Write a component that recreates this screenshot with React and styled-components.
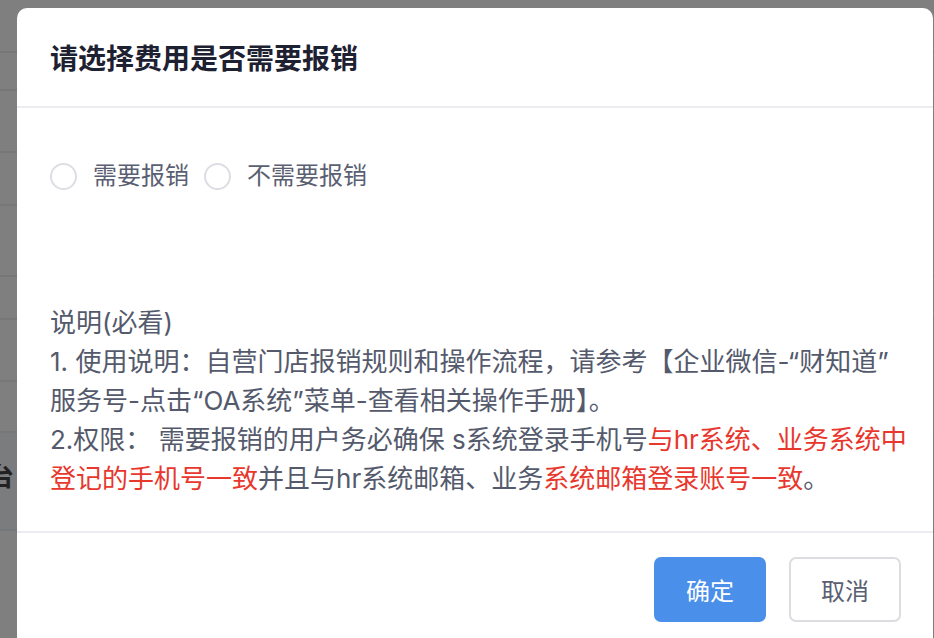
import React, { useState } from 'react';
import styled, { createGlobalStyle } from 'styled-components';

const GlobalStyle = createGlobalStyle`
  html, body {
    margin: 0;
    padding: 0;
    background: #fff;
    font-family: "Inter", "Noto Sans CJK SC", sans-serif;
    overflow: hidden;
  }
  * { box-sizing: border-box; }
`;

/* page behind the dialog */
const Page = styled.div`
  width: 934px;
  height: 638px;
  background: #fff;
`;

const PageRow = styled.div`
  height: ${p => p.h}px;
  border-bottom: 2px solid #eceef1;
  display: flex;
  align-items: center;
  background: ${p => (p.shade ? '#f7f8fa' : '#fff')};
`;

const PageText = styled.span`
  font-size: 26px;
  font-weight: 600;
  color: #444;
  margin-left: -12px;
  margin-top: -14px;
`;

const Mask = styled.div`
  position: fixed;
  inset: 0;
  background: rgba(0, 0, 0, 0.5);
`;

const Dialog = styled.div`
  position: fixed;
  left: 17px;
  top: 8px;
  width: 916px;
  background: #fff;
  border-radius: 10px;
  display: flex;
  flex-direction: column;
`;

const Header = styled.div`
  height: 100px;
  padding: 0 33px;
  display: flex;
  align-items: center;
  border-bottom: 2px solid #ebecef;
`;

const Title = styled.h2`
  margin: 0;
  font-size: 28px;
  font-weight: 600;
  color: #1d2131;
`;

const Body = styled.div`
  padding: 54px 33px 33px;
  display: flex;
  flex-direction: column;
`;

const RadioGroup = styled.div`
  display: flex;
  align-items: center;
  height: 28px;
  gap: 15px;
`;

const RadioItem = styled.label`
  display: flex;
  align-items: center;
  gap: 16px;
  cursor: pointer;
`;

const RadioCircle = styled.span`
  width: 27px;
  height: 27px;
  border-radius: 50%;
  border: 2px solid ${p => (p.checked ? '#4a8fe9' : '#dcdee3')};
  display: flex;
  align-items: center;
  justify-content: center;
  &::after {
    content: '';
    width: 13px;
    height: 13px;
    border-radius: 50%;
    background: #4a8fe9;
    display: ${p => (p.checked ? 'block' : 'none')};
  }
`;

const RadioLabel = styled.span`
  font-size: 24px;
  color: #5a6072;
  line-height: 28px;
`;

const Note = styled.p`
  margin: 113px 0 0;
  font-size: 26px;
  line-height: 39px;
  color: #545a6c;
  white-space: nowrap;
`;

const Red = styled.span`
  color: #e8372d;
`;

const Footer = styled.div`
  border-top: 2px solid #ebecef;
  padding: 24px 32px 30px;
  display: flex;
  justify-content: flex-end;
  gap: 23px;
`;

const Button = styled.button`
  width: 112px;
  height: 65px;
  border-radius: 7px;
  font-family: inherit;
  font-size: 24px;
  cursor: pointer;
  border: 2px solid ${p => (p.primary ? '#4a8fe9' : '#dcdde1')};
  background: ${p => (p.primary ? '#4a8fe9' : '#fff')};
  color: ${p => (p.primary ? '#fff' : '#5a6072')};
`;

const rows = [
  { h: 53 }, { h: 38 }, { h: 62 }, { h: 53 }, { h: 71 }, { h: 43 }, { h: 62 }, { h: 51 },
  { h: 98, text: '台', shade: true }, { h: 110 },
];

const options = ['需要报销', '不需要报销'];

export default function App() {
  const [choice, setChoice] = useState(null);

  return (
    <>
      <GlobalStyle />
      <Page>
        {rows.map((r, i) => (
          <PageRow key={i} h={r.h} shade={r.shade}>
            {r.text && <PageText>{r.text}</PageText>}
          </PageRow>
        ))}
      </Page>
      <Mask />
      <Dialog role="dialog" aria-modal="true">
        <Header>
          <Title>请选择费用是否需要报销</Title>
        </Header>
        <Body>
          <RadioGroup>
            {options.map(o => (
              <RadioItem key={o} onClick={() => setChoice(o)}>
                <RadioCircle checked={choice === o} />
                <RadioLabel>{o}</RadioLabel>
              </RadioItem>
            ))}
          </RadioGroup>
          <Note>
            说明(必看)<br />
            1. 使用说明：自营门店报销规则和操作流程，请参考【企业微信-“财知道”<br />
            服务号-点击“OA系统”菜单-查看相关操作手册】。<br />
            2.权限： 需要报销的用户务必确保 s系统登录手机号<Red>与hr系统、业务系统中</Red><br />
            <Red>登记的手机号一致</Red>并且与hr系统邮箱、业务<Red>系统邮箱登录账号一致</Red>。
          </Note>
        </Body>
        <Footer>
          <Button primary>确定</Button>
          <Button>取消</Button>
        </Footer>
      </Dialog>
    </>
  );
}
